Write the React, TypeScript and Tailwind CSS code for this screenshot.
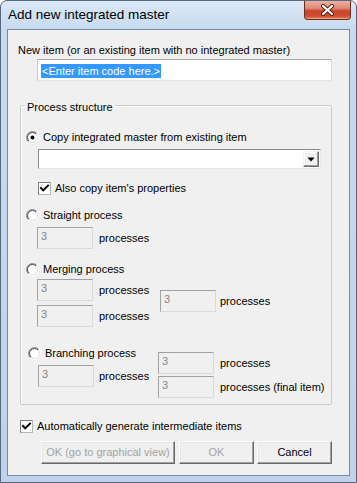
import React, { useId } from "react";

function Radio({ checked }: { checked?: boolean }) {
  const id = useId().replace(/[^a-zA-Z0-9]/g, "");
  return (
    <svg width="13" height="13" viewBox="0 0 13 13" className="shrink-0">
      <defs>
        <linearGradient id={`o${id}`} x1="0" y1="0" x2="1" y2="1">
          <stop offset="0.48" stopColor="#8c8c8c" />
          <stop offset="0.52" stopColor="#ffffff" />
        </linearGradient>
        <linearGradient id={`i${id}`} x1="0" y1="0" x2="1" y2="1">
          <stop offset="0.48" stopColor="#404040" />
          <stop offset="0.52" stopColor="#dedede" />
        </linearGradient>
      </defs>
      <circle cx="6.5" cy="6.5" r="6" fill="none" stroke={`url(#o${id})`} strokeWidth="1" />
      <circle cx="6.5" cy="6.5" r="5" fill="#ffffff" stroke={`url(#i${id})`} strokeWidth="1" />
      {checked && <circle cx="6.5" cy="6.5" r="2" fill="#000000" />}
    </svg>
  );
}

function CheckBox() {
  return (
    <div className="w-[13px] h-[13px] shrink-0 bg-white border border-t-[#7e7e7e] border-l-[#7e7e7e] border-r-[#b5b5b5] border-b-[#b5b5b5] flex items-center justify-center">
      <svg width="11" height="11" viewBox="0 0 11 11">
        <path d="M2 5 L4.2 7.4 L9 2.6" fill="none" stroke="#000000" strokeWidth="2" strokeLinecap="square" />
      </svg>
    </div>
  );
}

function NumBox() {
  return (
    <div className="w-[56px] h-[22px] shrink-0 bg-[#f0f0f0] border border-t-[#a2a2a2] border-l-[#a2a2a2] border-r-[#dadada] border-b-[#dadada] pl-[3px] pt-[2px] leading-[13px] text-[#858585]">
      3
    </div>
  );
}

function NumRow({ label, gap }: { label: string; gap: "g5" | "g6" }) {
  return (
    <div className={gap === "g5" ? "flex items-center gap-[5px]" : "flex items-center gap-[6px]"}>
      <NumBox />
      <span className="leading-[13px] whitespace-nowrap">{label}</span>
    </div>
  );
}

function Btn({ children, disabled, w }: { children: React.ReactNode; disabled?: boolean; w: "w134" | "w75" }) {
  return (
    <div
      className={`${w === "w134" ? "w-[134px]" : "w-[75px]"} h-[23px] shrink-0 flex items-center justify-center bg-[#f0f0f0] border border-t-[#fbfbfb] border-l-[#fbfbfb] border-r-[#696969] border-b-[#696969] shadow-[inset_-1px_-1px_0_#a0a0a0,inset_1px_1px_0_#e6e6e6] leading-[13px] whitespace-nowrap ${disabled ? "text-[#a3a3a3]" : "text-black"}`}
    >
      {children}
    </div>
  );
}

export default function App() {
  return (
    <div className="w-[357px] h-[483px] overflow-hidden rounded-t-[7px] border border-[#58687c] bg-[linear-gradient(180deg,#dbe8f6_0px,#c7daef_28px,#bed3eb_100%)] font-['Liberation_Sans',Arial,sans-serif] text-[11px] text-black">
      {/* title bar */}
      <div className="h-[28px] flex items-start justify-between">
        <div className="ml-[7px] mt-[5px] text-[13.5px] leading-[17px] text-black whitespace-nowrap">
          Add new integrated master
        </div>
        <div className="mr-[5px] w-[47px] h-[19px] rounded-b-[4px] border border-t-0 border-[#6e2a1e] bg-[linear-gradient(180deg,#eab0a2_0%,#df8a74_40%,#c9452b_55%,#cc4b2e_80%,#dd7a55_100%)] flex items-center justify-center shadow-[inset_0_-1px_0_#f0a080]">
          <svg width="15" height="12" viewBox="0 0 15 12">
            <path d="M3 2 L12 10 M12 2 L3 10" stroke="#4a1a12" strokeWidth="4" strokeLinecap="round" />
            <path d="M3 2 L12 10 M12 2 L3 10" stroke="#ffffff" strokeWidth="2.2" strokeLinecap="round" />
          </svg>
        </div>
      </div>

      {/* client area */}
      <div className="ml-[6px] w-[343px] h-[447px] border border-[#7a8a9e] bg-[#f0f0f0] flex flex-col items-start">
        <div className="mt-[14px] ml-[10px] h-[13px] leading-[13px] whitespace-nowrap">
          New item (or an existing item with no integrated master)
        </div>
        <div className="mt-[2px] ml-[29px] w-[295px] h-[22px] bg-white border border-t-[#a9abb1] border-l-[#c9ccd2] border-r-[#d8dbe0] border-b-[#e2e5ea] pl-[3px] pt-[3px]">
          <span className="inline-block h-[14px] leading-[14px] px-[1px] bg-[#3399ff] text-white whitespace-nowrap">
            &lt;Enter item code here.&gt;
          </span>
        </div>

        {/* group box */}
        <div className="mt-[24px] ml-[12px] w-[312px] h-[300px] border border-[#cbcbcb] rounded-[2px] shadow-[inset_1px_1px_0_#ffffff] flex flex-col items-start">
          <div className="-mt-[5px] ml-[4px] px-[2px] h-[13px] leading-[13px] bg-[#f0f0f0] whitespace-nowrap">
            Process structure
          </div>

          {/* copy */}
          <div className="mt-[17px] ml-[5px] h-[13px] flex items-center gap-[4px]">
            <Radio checked />
            <span className="leading-[13px] whitespace-nowrap">Copy integrated master from existing item</span>
          </div>
          <div className="mt-[5px] ml-[17px] w-[283px] h-[20px] bg-white border border-t-[#8a8a8a] border-l-[#8a8a8a] border-r-[#e8e8e8] border-b-[#e8e8e8] flex justify-end items-start">
            <div className="mt-[1px] mr-[1px] w-[16px] h-[16px] bg-[#f0f0f0] border border-t-[#f4f4f4] border-l-[#f4f4f4] border-r-[#696969] border-b-[#696969] shadow-[inset_-1px_-1px_0_#a0a0a0,inset_1px_1px_0_#ffffff] flex items-center justify-center">
              <svg width="8" height="5" viewBox="0 0 8 5">
                <path d="M0.5 0.5 L7.5 0.5 L4 4.5 Z" fill="#000000" />
              </svg>
            </div>
          </div>
          <div className="mt-[13px] ml-[17px] h-[13px] flex items-center gap-[4px]">
            <CheckBox />
            <span className="leading-[13px] whitespace-nowrap">Also copy item's properties</span>
          </div>

          {/* straight */}
          <div className="mt-[14px] ml-[5px] h-[13px] flex items-center gap-[4px]">
            <Radio />
            <span className="leading-[13px] whitespace-nowrap">Straight process</span>
          </div>
          <div className="mt-[5px] ml-[16px]">
            <NumRow label="processes" gap="g6" />
          </div>

          {/* merging */}
          <div className="mt-[14px] ml-[5px] h-[13px] flex items-center gap-[4px]">
            <Radio />
            <span className="leading-[13px] whitespace-nowrap">Merging process</span>
          </div>
          <div className="mt-[3px] ml-[16px] flex items-start">
            <div className="w-[123px] flex flex-col gap-[4px]">
              <NumRow label="processes" gap="g6" />
              <NumRow label="processes" gap="g6" />
            </div>
            <div className="mt-[11px] flex items-center gap-[4px]">
              <NumBox />
              <span className="leading-[13px] whitespace-nowrap">processes</span>
            </div>
          </div>

          {/* branching */}
          <div className="mt-[20px] flex items-start">
            <div className="w-[137px] flex flex-col items-start">
              <div className="ml-[7px] h-[13px] flex items-center gap-[4px]">
                <Radio />
                <span className="leading-[13px] whitespace-nowrap">Branching process</span>
              </div>
              <div className="mt-[5px] ml-[17px]">
                <NumRow label="processes" gap="g5" />
              </div>
            </div>
            <div className="mt-[5px] flex flex-col gap-[2px]">
              <NumRow label="processes" gap="g6" />
              <NumRow label="processes (final item)" gap="g6" />
            </div>
          </div>
        </div>

        <div className="mt-[15px] ml-[12px] h-[13px] flex items-center gap-[4px]">
          <CheckBox />
          <span className="leading-[13px] whitespace-nowrap">Automatically generate intermediate items</span>
        </div>

        <div className="mt-[8px] ml-[33px] flex items-start">
          <Btn disabled w="w134">OK (go to graphical view)</Btn>
          <div className="ml-[4px]">
            <Btn disabled w="w75">OK</Btn>
          </div>
          <div className="ml-[3px]">
            <Btn w="w75">Cancel</Btn>
          </div>
        </div>
      </div>
    </div>
  );
}
